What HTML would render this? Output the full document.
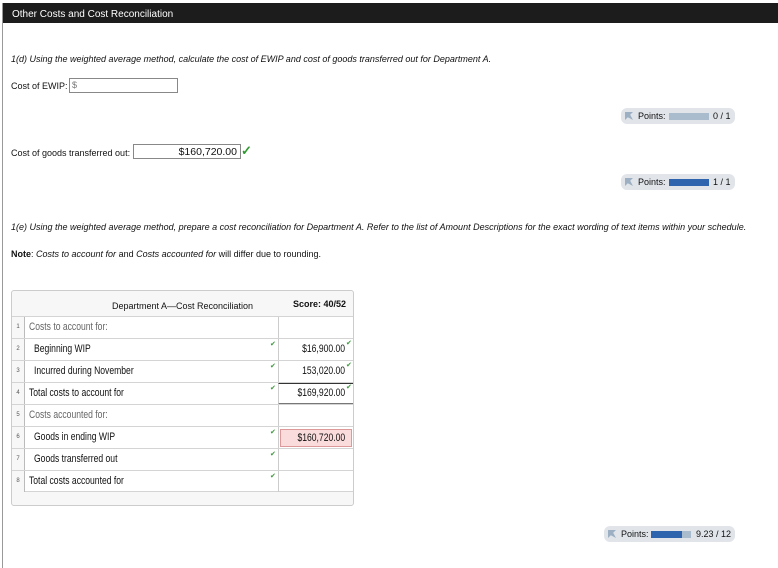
<!DOCTYPE html>
<html><head><style>
*{margin:0;padding:0;box-sizing:border-box}
body{width:778px;height:568px;background:#fff;font-family:"Liberation Sans",sans-serif;font-size:9px;color:#111;position:relative;overflow:hidden}
.a{position:absolute}
.hdr{left:3px;top:3px;width:775px;height:20px;background:#1c1c1c;color:#fff;font-size:10px;padding:6px 0 0 9px}
.lb{left:2px;top:3px;width:1px;height:565px;background:#999}
.it{font-style:italic}
.inp{border:1px solid #888;background:#fff;height:15px}
.pts{background:#e1e5ea;border-radius:6px;height:16px;font-size:9px;color:#111}
.pts .ic{position:absolute;left:4px;top:4px;width:8px;height:8px;background:#9db0c3;clip-path:polygon(0 0,100% 0,65% 35%,100% 100%,35% 65%,0 100%)}
.bar{position:absolute;top:5px;height:7px;width:40px;background:#a9bccd}
.tb{left:11px;top:290px;width:343px;height:216px;border:1px solid #ccc;border-radius:3px;background:#f7f7f7}
.row{position:absolute;left:0;width:341px;height:22px;border-top:1px solid #d4d4d4;background:#fff}
.num{position:absolute;left:0;top:0;width:13px;height:21px;font-size:6px;color:#555;text-align:center;line-height:21px;border-right:1px solid #bbb;background:#f7f7f7}
.lab{position:absolute;left:17px;top:0;line-height:21px;font-size:11px;transform:scaleX(.78);transform-origin:left;white-space:nowrap}
.val{position:absolute;left:266px;top:0;width:75px;height:21px;border-left:1px solid #ccc;line-height:21px}
.vt{position:absolute;right:8px;top:0;font-size:11px;transform:scaleX(.78);transform-origin:right;white-space:nowrap}
.ck{position:absolute;color:#3a9a3a;font-size:7px}
</style></head><body>
<div class="a lb"></div>
<div class="a hdr">Other Costs and Cost Reconciliation</div>
<div class="a it" style="left:11px;top:54px">1(d) Using the weighted average method, calculate the cost of EWIP and cost of goods transferred out for Department A.</div>
<div class="a" style="left:11px;top:81px">Cost of EWIP:</div>
<div class="a inp" style="left:69px;top:78px;width:109px;color:#777;padding-left:2px;line-height:13px">$</div>
<div class="a pts" style="left:621px;top:108px;width:114px"><span class="ic"></span><span class="a" style="left:17px;top:3px">Points:</span><span class="bar" style="left:48px"></span><span class="a" style="left:92px;top:3px">0 / 1</span></div>
<div class="a" style="left:11px;top:148px">Cost of goods transferred out:</div>
<div class="a inp" style="left:133px;top:144px;width:108px;text-align:right;padding-right:3px;font-size:10.5px;line-height:14px">$160,720.00</div>
<div class="a" style="left:241px;top:143px;color:#2f9a2f;font-size:13px;font-weight:bold">✓</div>
<div class="a pts" style="left:621px;top:174px;width:114px"><span class="ic"></span><span class="a" style="left:17px;top:3px">Points:</span><span class="bar" style="left:48px;background:#2e63ad"></span><span class="a" style="left:92px;top:3px">1 / 1</span></div>
<div class="a it" style="left:11px;top:222px;font-size:9px">1(e) Using the weighted average method, prepare a cost reconciliation for Department A. Refer to the list of Amount Descriptions for the exact wording of text items within your schedule.</div>
<div class="a" style="left:11px;top:249px"><b>Note</b>: <i>Costs to account for</i> and <i>Costs accounted for</i> will differ due to rounding.</div>
<div class="a tb">
<div class="a" style="left:100px;top:10px">Department A—Cost Reconciliation</div>
<div class="a" style="left:281px;top:8px;font-weight:bold">Score: 40/52</div>
<div class="row" style="top:25px"><div class="num">1</div><div class="lab" style="color:#666">Costs to account for:</div><div class="val"></div></div>
<div class="row" style="top:47px"><div class="num">2</div><div class="lab" style="left:22px">Beginning WIP</div><div class="ck" style="left:258px;top:1px">✔</div><div class="val"><span class="vt">$16,900.00</span></div><div class="ck" style="left:334px;top:0">✔</div></div>
<div class="row" style="top:69px"><div class="num">3</div><div class="lab" style="left:22px">Incurred during November</div><div class="ck" style="left:258px;top:1px">✔</div><div class="val"><span class="vt">153,020.00</span></div><div class="ck" style="left:334px;top:0">✔</div></div>
<div class="row" style="top:91px"><div class="num">4</div><div class="lab">Total costs to account for</div><div class="ck" style="left:258px;top:1px">✔</div><div class="val" style="border-bottom:2px solid #777;border-top:1px solid #333;height:22px;line-height:19px"><span class="vt">$169,920.00</span></div><div class="ck" style="left:334px;top:0">✔</div></div>
<div class="row" style="top:113px"><div class="num">5</div><div class="lab" style="color:#666">Costs accounted for:</div><div class="val"></div></div>
<div class="row" style="top:135px"><div class="num">6</div><div class="lab" style="left:22px">Goods in ending WIP</div><div class="ck" style="left:258px;top:1px">✔</div><div class="val"><div style="position:absolute;left:1px;top:2px;width:72px;height:18px;background:#fbdcdc;border:1px solid #d99;line-height:16px"><span class="vt" style="right:6px">$160,720.00</span></div></div></div>
<div class="row" style="top:157px"><div class="num">7</div><div class="lab" style="left:22px">Goods transferred out</div><div class="ck" style="left:258px;top:1px">✔</div><div class="val"></div></div>
<div class="row" style="top:179px;border-bottom:1px solid #d4d4d4"><div class="num">8</div><div class="lab">Total costs accounted for</div><div class="ck" style="left:258px;top:1px">✔</div><div class="val"></div></div>
</div>
<div class="a pts" style="left:604px;top:526px;width:131px"><span class="ic"></span><span class="a" style="left:17px;top:3px">Points:</span><span class="bar" style="left:47px;background:linear-gradient(90deg,#2e63ad 77%,#a9bccd 77%)"></span><span class="a" style="left:92px;top:3px">9.23 / 12</span></div>
</body></html>
